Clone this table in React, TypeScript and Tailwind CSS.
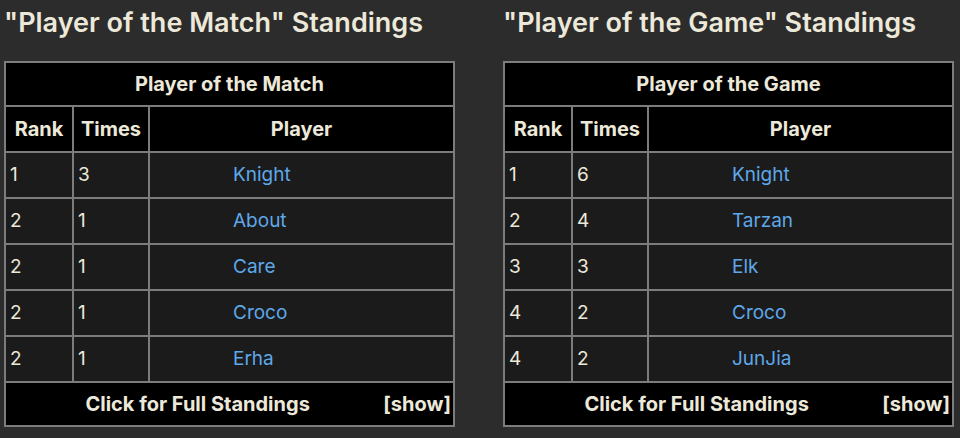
import React from 'react';

type Row = { rank: number; times: number; player: string };

const matchRows: Row[] = [
  { rank: 1, times: 3, player: 'Knight' },
  { rank: 2, times: 1, player: 'About' },
  { rank: 2, times: 1, player: 'Care' },
  { rank: 2, times: 1, player: 'Croco' },
  { rank: 2, times: 1, player: 'Erha' },
];

const gameRows: Row[] = [
  { rank: 1, times: 6, player: 'Knight' },
  { rank: 2, times: 4, player: 'Tarzan' },
  { rank: 3, times: 3, player: 'Elk' },
  { rank: 4, times: 2, player: 'Croco' },
  { rank: 4, times: 2, player: 'JunJia' },
];

// One standings block: heading + wiki-style table
const Standings: React.FC<{ title: string; caption: string; rows: Row[] }> = ({ title, caption, rows }) => (
  <section className="w-[451px]">
    <h2 className="h-[61px] pt-[8px] text-[27px] font-semibold leading-[30px] text-[#ede9da] whitespace-nowrap">
      "{title}" Standings
    </h2>
    <table className="w-full border-collapse border-2 border-[#7c7c7c] text-[19px] text-[#ede9da] table-fixed">
      <colgroup>
        <col className="w-[68px]" />
        <col className="w-[76px]" />
        <col />
      </colgroup>
      <thead>
        <tr className="h-[44px] bg-black text-[20px]">
          <th colSpan={3} className="border-2 border-[#7c7c7c] font-bold text-center">{caption}</th>
        </tr>
        <tr className="h-[46px] bg-black text-[20px]">
          <th className="border-2 border-[#7c7c7c] font-bold text-center">Rank</th>
          <th className="border-2 border-[#7c7c7c] font-bold text-center">Times</th>
          <th className="border-2 border-[#7c7c7c] font-bold text-center">Player</th>
        </tr>
      </thead>
      <tbody>
        {rows.map((r, i) => (
          <tr key={i} className="h-[46px] bg-[#1b1b1b]">
            <td className="border-2 border-[#7c7c7c] pl-[4px]">{r.rank}</td>
            <td className="border-2 border-[#7c7c7c] pl-[4px]">{r.times}</td>
            <td className="border-2 border-[#7c7c7c] pl-[83px] text-[#5ea8ea]">{r.player}</td>
          </tr>
        ))}
        <tr className="h-[44px] bg-black text-[20px]">
          <td colSpan={3} className="border-2 border-[#7c7c7c] p-0">
            <div className="flex items-center font-bold">
              <span className="flex-1 text-center pl-[6px]">Click for Full Standings</span>
              <span className="pr-[2px]">[show]</span>
            </div>
          </td>
        </tr>
      </tbody>
    </table>
  </section>
);

const App: React.FC = () => {
  return (
    <div className="min-h-screen w-[960px] h-[438px] bg-[#2c2c2c] font-['Inter',sans-serif] overflow-hidden">
      <div className="flex gap-[48px] pl-[4px]">
        <Standings title="Player of the Match" caption="Player of the Match" rows={matchRows} />
        <Standings title="Player of the Game" caption="Player of the Game" rows={gameRows} />
      </div>
    </div>
  );
};

export default App;
